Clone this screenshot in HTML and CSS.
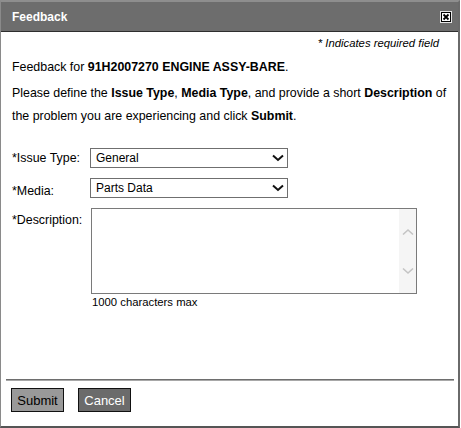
FILE: index.html
```html
<!DOCTYPE html>
<html>
<head>
<meta charset="utf-8">
<link rel="stylesheet" href="styles.css">
</head>
<body>
<div class="dialog">
  <div class="titlebar">
    <span class="title">Feedback</span>
    <svg class="close" width="12" height="12" viewBox="0 0 12 12">
      <rect x="0" y="0" width="12" height="12" fill="#e6e6e6"/>
      <rect x="1.5" y="1.5" width="9" height="9" fill="#fff" stroke="#000" stroke-width="1"/>
      <path d="M3.5 3.5 L8.5 8.5 M8.5 3.5 L3.5 8.5" stroke="#000" stroke-width="1.8"/>
    </svg>
  </div>
  <div class="content">
    <p class="req">* Indicates required field</p>
    <p class="for">Feedback for <b>91H2007270 ENGINE ASSY-BARE</b>.</p>
    <p class="intro">Please define the <b>Issue Type</b>, <b>Media Type</b>, and provide a short <b>Description</b> of the problem you are experiencing and click <b>Submit</b>.</p>
    <div class="form">
      <label class="lbl">*Issue Type:</label>
      <div class="selwrap">
        <select class="sel"><option>General</option></select>
        <svg class="chev" width="12" height="8" viewBox="0 0 12 8"><path d="M1 1.5 L6 6 L11 1.5" fill="none" stroke="#111" stroke-width="2"/></svg>
      </div>
      <label class="lbl lbl-media">*Media:</label>
      <div class="selwrap">
        <select class="sel"><option>Parts Data</option></select>
        <svg class="chev" width="12" height="8" viewBox="0 0 12 8"><path d="M1 1.5 L6 6 L11 1.5" fill="none" stroke="#111" stroke-width="2"/></svg>
      </div>
      <label class="lbl lbl-desc">*Description:</label>
      <div class="descfield">
        <div class="areabox">
          <textarea class="area"></textarea>
          <div class="scroll">
            <svg width="12" height="8" viewBox="0 0 12 8"><path d="M1 6.5 L6 2 L11 6.5" fill="none" stroke="#c4c4c4" stroke-width="1.6"/></svg>
            <svg width="12" height="8" viewBox="0 0 12 8"><path d="M1 1.5 L6 6 L11 1.5" fill="none" stroke="#c4c4c4" stroke-width="1.6"/></svg>
          </div>
        </div>
        <div class="counter">1000 characters max</div>
      </div>
    </div>
  </div>
  <div class="footer">
    <div class="sep"></div>
    <div class="buttons">
      <button class="btn btn-submit">Submit</button>
      <button class="btn btn-cancel">Cancel</button>
    </div>
  </div>
</div>
</body>
</html>
```

FILE: styles.css
```css
html, body {
  margin: 0;
  padding: 0;
  background: #fff;
}
body {
  font-family: "Liberation Sans", Arial, sans-serif;
  color: #000;
}
.dialog {
  box-sizing: border-box;
  width: 460px;
  height: 428px;
  border-left: 1px solid #8a8a8a;
  border-right: 2px solid #6a6a6a;
  border-bottom: 2px solid #555;
  border-top: 2px solid #8e8e8e;
  display: flex;
  flex-direction: column;
  background: #fff;
}
.titlebar {
  height: 29px;
  background: #6d6d6d;
  border-bottom: 1px solid #2e2e2e;
  display: flex;
  align-items: center;
  justify-content: space-between;
  padding: 0 6px 0 11px;
}
.title {
  color: #fff;
  font-weight: bold;
  font-size: 12px;
}
.close {
  display: block;
}
.content {
  padding: 0 0 0 11px;
}
.content p {
  margin: 0;
}
.req {
  margin-top: 4px !important;
  font-size: 11.3px;
  line-height: 14px;
  font-style: italic;
  text-align: right;
  padding-right: 19px;
}
.for {
  margin-top: 10px !important;
  font-size: 12.4px;
  line-height: 14px;
}
.intro {
  margin-top: 8px !important;
  font-size: 12.4px;
  line-height: 23px;
  padding-right: 4px;
}
.form {
  margin-top: 20px;
  display: grid;
  grid-template-columns: 78px auto;
  row-gap: 10px;
  align-items: start;
}
.lbl {
  font-size: 12.4px;
  line-height: 14px;
  padding-top: 3px;
}
.lbl-media {
  padding-top: 6px;
}
.lbl-desc {
  padding-top: 5px;
}
.selwrap {
  position: relative;
  width: 198px;
  height: 20px;
}
.sel {
  appearance: none;
  -webkit-appearance: none;
  box-sizing: border-box;
  width: 198px;
  height: 20px;
  margin: 0;
  border: 1px solid #6f6f6f;
  border-radius: 0;
  background: #fff;
  font-family: "Liberation Sans", Arial, sans-serif;
  font-size: 12px;
  color: #000;
  padding: 0 0 0 5px;
  outline: none;
}
.chev {
  position: absolute;
  right: 4px;
  top: 6px;
  pointer-events: none;
}
.descfield {
  margin-left: 1px;
}
.areabox {
  box-sizing: border-box;
  width: 326px;
  height: 86px;
  border: 1px solid #7a7a7a;
  display: flex;
  background: #fff;
}
.area {
  flex: 1;
  border: none;
  outline: none;
  resize: none;
  margin: 0;
  padding: 2px;
  background: #fff;
}
.scroll {
  width: 17px;
  background: #f5f5f5;
  display: flex;
  flex-direction: column;
  align-items: center;
  justify-content: space-between;
  padding: 19px 0 18px;
}
.scroll svg {
  display: block;
}
.counter {
  font-size: 11.3px;
  line-height: 14px;
  padding-left: 1px;
  margin-top: 1px;
}
.footer {
  margin-top: auto;
  padding: 0 4px 14px 5px;
}
.sep {
  height: 1px;
  border-top: 1px solid #6e6e6e;
  background: #a8a8a8;
}
.buttons {
  display: flex;
  gap: 14px;
  margin-top: 7px;
  padding-left: 5px;
}
.btn {
  box-sizing: border-box;
  height: 24px;
  width: 53px;
  border: 1px solid #111;
  border-radius: 0;
  font-family: "Liberation Sans", Arial, sans-serif;
  font-size: 13px;
  padding: 0;
  margin: 0;
}
.btn-submit {
  background: #999;
  color: #000;
}
.btn-cancel {
  background: #6b6b6b;
  color: #fff;
}
```
